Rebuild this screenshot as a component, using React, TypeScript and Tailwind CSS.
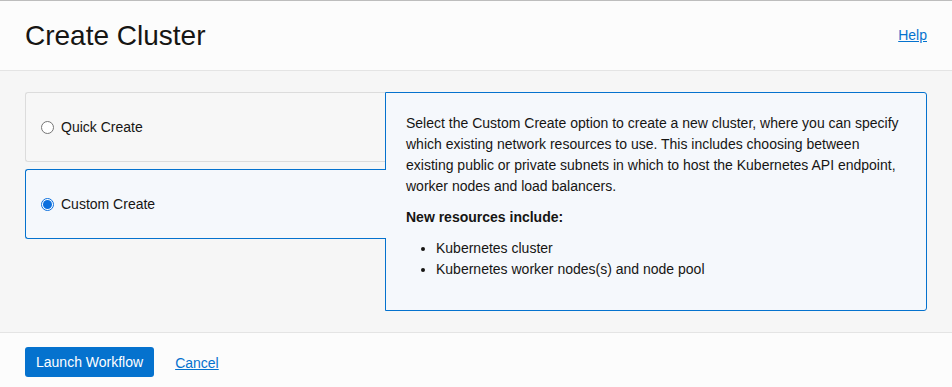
import React from 'react';

function Radio({ checked }: { checked: boolean }) {
  if (checked) {
    return (
      <span className="flex h-[13px] w-[13px] shrink-0 items-center justify-center rounded-full border border-[#0b6fde] bg-white">
        <span className="h-[9px] w-[9px] rounded-full bg-[#0b6fde]" />
      </span>
    );
  }
  return <span className="h-[13px] w-[13px] shrink-0 rounded-full border border-[#767676] bg-white" />;
}

export default function App() {
  const [mode, setMode] = React.useState<'quick' | 'custom'>('custom');

  return (
    <div className="flex h-[387px] w-[952px] flex-col overflow-hidden bg-[#fcfcfc] text-[14px] text-[#161513] font-['Liberation_Sans',Arial,sans-serif]">
      <header className="flex h-[71px] shrink-0 items-center justify-between border-t border-b border-t-[#bdbdbd] border-b-[#e4e4e4] bg-[#fcfcfc] pl-[25px] pr-[25px]">
        <h1 className="text-[28px] leading-none text-[#161513] mt-px">Create Cluster</h1>
        <a href="#" className="text-[14px] text-[#0572ce] underline">Help</a>
      </header>

      <main className="flex flex-1 bg-[#f6f6f6] px-[25px] pt-[21px] pb-[21px]">
        <div className="flex w-[360px] shrink-0 flex-col gap-[7px]">
          <button
            onClick={() => setMode('quick')}
            className={`flex h-[70px] items-center gap-[7px] rounded-l-[3px] pl-[15px] text-left ${mode === 'quick' ? 'relative z-10 -mr-px border border-r-0 border-[#0572ce] bg-[#f5f8fc]' : 'border border-r-0 border-[#dcdcdc] bg-[#f7f7f7]'}`}
          >
            <Radio checked={mode === 'quick'} />
            <span>Quick Create</span>
          </button>
          <button
            onClick={() => setMode('custom')}
            className={`flex h-[70px] items-center gap-[7px] rounded-l-[3px] pl-[15px] text-left ${mode === 'custom' ? 'relative z-10 -mr-px border border-r-0 border-[#0572ce] bg-[#f5f8fc]' : 'border border-r-0 border-[#dcdcdc] bg-[#f7f7f7]'}`}
          >
            <Radio checked={mode === 'custom'} />
            <span>Custom Create</span>
          </button>
        </div>

        <section className="flex-1 rounded-r-[3px] border border-[#0572ce] bg-[#f5f8fc] px-[20px] pt-[20px] pb-[20px] leading-[21px]">
          <p>
            Select the Custom Create option to create a new cluster, where you can specify which existing network
            resources to use. This includes choosing between existing public or private subnets in which to host the
            Kubernetes API endpoint, worker nodes and load balancers.
          </p>
          <p className="mt-[10px] font-bold">New resources include:</p>
          <ul className="mt-[10px] list-disc pl-[30px]">
            <li>Kubernetes cluster</li>
            <li>Kubernetes worker nodes(s) and node pool</li>
          </ul>
        </section>
      </main>

      <footer className="flex h-[55px] shrink-0 items-start gap-[21px] border-t border-[#e4e4e4] bg-[#fcfcfc] px-[25px] pt-[14px]">
        <button className="h-[30px] rounded-[3px] bg-[#0572ce] px-[11px] text-[14px] text-white">Launch Workflow</button>
        <a href="#" className="mt-[6px] text-[#0572ce] underline">Cancel</a>
      </footer>
    </div>
  );
}
